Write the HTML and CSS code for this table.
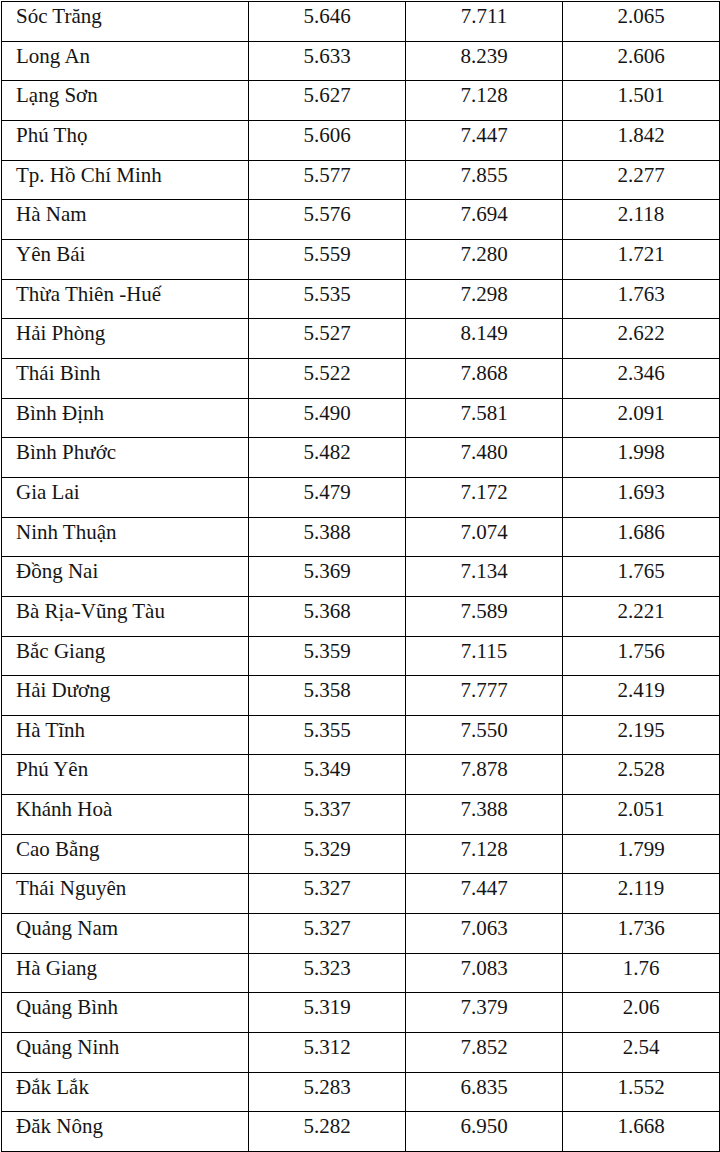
FILE: index.html
```html
<!DOCTYPE html>
<html lang="vi">
<head>
<meta charset="utf-8">
<title>Bảng số liệu</title>
<link rel="stylesheet" href="styles.css">
</head>
<body>
<table class="data">
<colgroup><col class="c-name"><col class="c-num"><col class="c-num"><col class="c-num"></colgroup>
<tbody>
<tr><td>Sóc Trăng</td><td>5.646</td><td>7.711</td><td>2.065</td></tr>
<tr><td>Long An</td><td>5.633</td><td>8.239</td><td>2.606</td></tr>
<tr><td>Lạng Sơn</td><td>5.627</td><td>7.128</td><td>1.501</td></tr>
<tr><td>Phú Thọ</td><td>5.606</td><td>7.447</td><td>1.842</td></tr>
<tr><td>Tp. Hồ Chí Minh</td><td>5.577</td><td>7.855</td><td>2.277</td></tr>
<tr><td>Hà Nam</td><td>5.576</td><td>7.694</td><td>2.118</td></tr>
<tr><td>Yên Bái</td><td>5.559</td><td>7.280</td><td>1.721</td></tr>
<tr><td>Thừa Thiên -Huế</td><td>5.535</td><td>7.298</td><td>1.763</td></tr>
<tr><td>Hải Phòng</td><td>5.527</td><td>8.149</td><td>2.622</td></tr>
<tr><td>Thái Bình</td><td>5.522</td><td>7.868</td><td>2.346</td></tr>
<tr><td>Bình Định</td><td>5.490</td><td>7.581</td><td>2.091</td></tr>
<tr><td>Bình Phước</td><td>5.482</td><td>7.480</td><td>1.998</td></tr>
<tr><td>Gia Lai</td><td>5.479</td><td>7.172</td><td>1.693</td></tr>
<tr><td>Ninh Thuận</td><td>5.388</td><td>7.074</td><td>1.686</td></tr>
<tr><td>Đồng Nai</td><td>5.369</td><td>7.134</td><td>1.765</td></tr>
<tr><td>Bà Rịa-Vũng Tàu</td><td>5.368</td><td>7.589</td><td>2.221</td></tr>
<tr><td>Bắc Giang</td><td>5.359</td><td>7.115</td><td>1.756</td></tr>
<tr><td>Hải Dương</td><td>5.358</td><td>7.777</td><td>2.419</td></tr>
<tr><td>Hà Tĩnh</td><td>5.355</td><td>7.550</td><td>2.195</td></tr>
<tr><td>Phú Yên</td><td>5.349</td><td>7.878</td><td>2.528</td></tr>
<tr><td>Khánh Hoà</td><td>5.337</td><td>7.388</td><td>2.051</td></tr>
<tr><td>Cao Bằng</td><td>5.329</td><td>7.128</td><td>1.799</td></tr>
<tr><td>Thái Nguyên</td><td>5.327</td><td>7.447</td><td>2.119</td></tr>
<tr><td>Quảng Nam</td><td>5.327</td><td>7.063</td><td>1.736</td></tr>
<tr><td>Hà Giang</td><td>5.323</td><td>7.083</td><td>1.76</td></tr>
<tr><td>Quảng Bình</td><td>5.319</td><td>7.379</td><td>2.06</td></tr>
<tr><td>Quảng Ninh</td><td>5.312</td><td>7.852</td><td>2.54</td></tr>
<tr><td>Đắk Lắk</td><td>5.283</td><td>6.835</td><td>1.552</td></tr>
<tr><td>Đăk Nông</td><td>5.282</td><td>6.950</td><td>1.668</td></tr>
</tbody>
</table>
</body>
</html>
```
FILE: styles.css
```css
html, body {
  margin: 0;
  padding: 0;
  background: #fff;
}
body {
  padding-top: 1px;
  padding-left: 1px;
}
.data {
  border-collapse: collapse;
  table-layout: fixed;
  width: 718px;
  font-family: "Liberation Serif", "Times New Roman", serif;
  font-size: 21px;
  line-height: 24px;
  color: #151515;
}
.c-name { width: 247px; }
.c-num { width: 157px; }
.data td {
  border: 1.4px solid #000;
  height: 39.66px;
  box-sizing: border-box;
  padding: 2px 0 0 0;
  vertical-align: top;
  text-align: center;
  white-space: nowrap;
}
.data td:first-child {
  text-align: left;
  padding-left: 14px;
}
```
